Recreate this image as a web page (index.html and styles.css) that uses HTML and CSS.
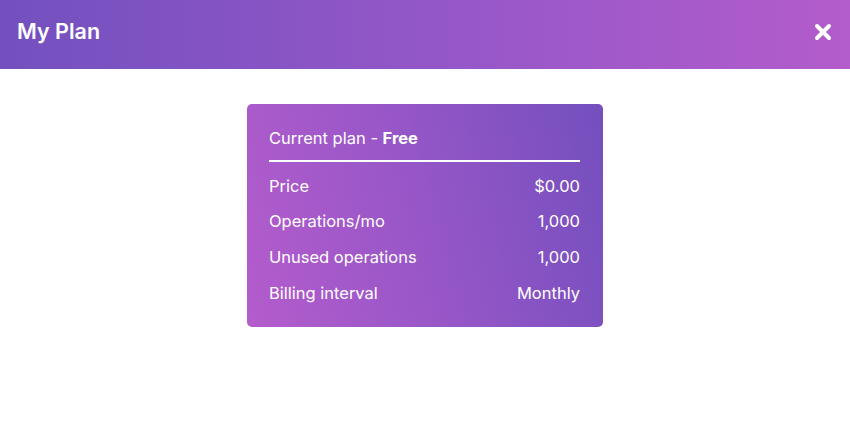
FILE: index.html
```html
<html>
  <head>
    <link rel="stylesheet" href="styles.css">
  </head>
  <body>
    <div class="header">
      <h1 class="title">My Plan</h1>
      <svg class="close" width="18" height="18" viewBox="0 0 18 18">
        <path d="M3 3 L15 15 M15 3 L3 15" stroke="#fff" stroke-width="4" stroke-linecap="round"/>
      </svg>
    </div>
    <div class="main">
      <div class="plan-card">
        <div class="plan-name">Current plan - <b>Free</b></div>
        <div class="plan-row"><span>Price</span><span>$0.00</span></div>
        <div class="plan-row"><span>Operations/mo</span><span>1,000</span></div>
        <div class="plan-row"><span>Unused operations</span><span>1,000</span></div>
        <div class="plan-row"><span>Billing interval</span><span>Monthly</span></div>
      </div>
    </div>
  </body>
</html>
```

FILE: styles.css
```css
body {
  margin: 0;
  font-family: Inter, "Noto Sans", sans-serif;
  background: #fff;
  color: #fff;
}

/* Top bar */
.header {
  height: 69px;
  display: flex;
  align-items: center;
  justify-content: space-between;
  padding: 0 18px 0 17px;
  background: linear-gradient(90deg, #7350bf 0%, #9a58c9 60%, #b35ccb 100%);
}

.title {
  margin: 0 0 7px;
  font-size: 21.5px;
  font-weight: 600;
}

.close {
  margin-bottom: 6px;
}

/* Plan card */
.main {
  display: flex;
  justify-content: center;
  padding-top: 35px;
}

.plan-card {
  width: 356px;
  box-sizing: border-box;
  padding: 24px 23px 16px 22px;
  border-radius: 5px;
  background: linear-gradient(75deg, #b45ccc 0%, #9656c7 50%, #744fbe 100%);
  font-size: 16.5px;
}

.plan-name {
  line-height: 20px;
  padding-bottom: 12px;
  border-bottom: 2px solid #fff;
  margin-bottom: 6.5px;
}

.plan-row {
  display: flex;
  justify-content: space-between;
  line-height: 19px;
  padding: 8px 0 8.7px;
}
```
